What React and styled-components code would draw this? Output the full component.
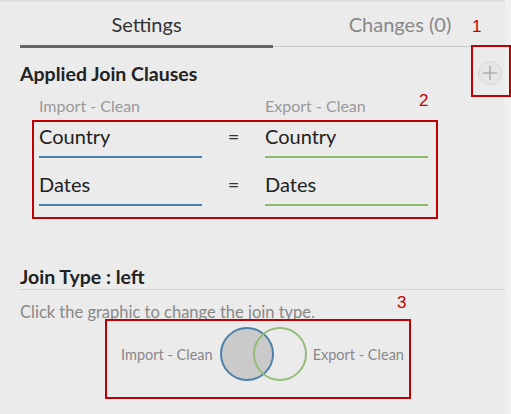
import React from "react";
import styled, { createGlobalStyle } from "styled-components";

const Global = createGlobalStyle`
  html, body { margin: 0; padding: 0; background: #ebebeb; }
  body { font-family: Lato, "Open Sans", sans-serif; }
`;

const Page = styled.div`
  position: relative;
  width: 511px;
  height: 414px;
  display: flex;
  background: #ebebeb;
  overflow: hidden;
`;

const Panel = styled.div`
  width: 505px;
  border-top: 2px solid #dedede;
  padding: 0 0 0 20px;
  box-sizing: border-box;
  display: flex;
  flex-direction: column;
`;

const SideStrip = styled.div`
  flex: 1;
  background: #f0f0f0;
`;

const Tabs = styled.div`
  display: flex;
  height: 46px;
`;

const Tab = styled.div`
  width: ${(p) => p.$w}px;
  box-sizing: border-box;
  display: flex;
  justify-content: center;
  padding-top: 10px;
  padding-left: ${(p) => p.$pl || 0}px;
  font-size: 20px;
  color: ${(p) => (p.$active ? "#333" : "#888")};
  border-bottom: ${(p) => (p.$active ? "3px solid #666" : "1px solid #c9c9c9")};
  height: ${(p) => (p.$active ? 46 : 45)}px;
`;

const SectionHead = styled.div`
  display: flex;
  align-items: center;
  justify-content: space-between;
  margin-top: ${(p) => p.$mt}px;
  padding-right: 3px;
  font-weight: 700;
  font-size: 19.5px;
  color: #222;
  height: 24px;
`;

const AddButton = styled.div`
  width: 22px;
  height: 22px;
  border-radius: 50%;
  background: #e6e6e6;
  border: 1px solid #d6d6d6;
  display: flex;
  align-items: center;
  justify-content: center;
`;

const SourceLabels = styled.div`
  display: grid;
  grid-template-columns: 226px 1fr;
  padding-left: 19px;
  margin-top: 11px;
  font-size: 16px;
  color: #999;
`;

const Clauses = styled.div`
  display: flex;
  flex-direction: column;
  padding-left: 19px;
  margin-top: 6px;
  gap: 11px;
`;

const ClauseRow = styled.div`
  display: grid;
  grid-template-columns: 163px 63px 163px;
  align-items: start;
`;

const Field = styled.div`
  font-size: 20px;
  color: #222;
  height: 37px;
  box-sizing: border-box;
  padding-top: 3px;
  border-bottom: 2px solid ${(p) => p.$color};
`;

const Equals = styled.div`
  font-size: 20px;
  color: #333;
  text-align: center;
  padding-top: 3px;
`;

const Divider = styled.div`
  height: 1px;
  background: #d3d3d3;
  margin-top: 1px;
`;

const Hint = styled.div`
  font-size: 16.5px;
  color: #888;
  margin-top: 12px;
`;

const VennRow = styled.div`
  display: flex;
  align-items: center;
  justify-content: center;
  margin-top: 3px;
  font-size: 14.5px;
  color: #888;
`;

const VennLabel = styled.span`
  margin: ${(p) => (p.$side === "left" ? "0 6px 0 0" : "0 0 0 5px")};
`;

const Annot = styled.div`
  position: absolute;
  left: ${(p) => p.$x}px;
  top: ${(p) => p.$y}px;
  width: ${(p) => p.$w}px;
  height: ${(p) => p.$h}px;
  border: 2px solid #c00000;
  box-sizing: border-box;
  pointer-events: none;
`;

const AnnotNum = styled.div`
  position: absolute;
  left: ${(p) => p.$x}px;
  top: ${(p) => p.$y}px;
  color: #c00000;
  font-family: "Liberation Sans", Arial, sans-serif;
  font-size: 17px;
  line-height: 1;
`;

function PlusIcon() {
  return (
    <svg width="16" height="16" viewBox="0 0 16 16">
      <path d="M8 1v14M1 8h14" stroke="#adadad" strokeWidth="1.6" />
    </svg>
  );
}

function Venn() {
  return (
    <svg width="89" height="58" viewBox="0 0 89 58">
      <circle cx="28" cy="29" r="26" fill="#cacaca" />
      <circle cx="28" cy="29" r="26" fill="none" stroke="#4d80a9" strokeWidth="2" />
      <circle cx="61" cy="29" r="26" fill="none" stroke="#93bc7a" strokeWidth="2" />
    </svg>
  );
}

export default function App() {
  const clauses = [
    ["Country", "Country"],
    ["Dates", "Dates"],
  ];
  return (
    <>
      <Global />
      <Page>
        <Panel>
          <Tabs>
            <Tab $w={253} $active>Settings</Tab>
            <Tab $w={232} $pl={22}>Changes (0)</Tab>
          </Tabs>
          <SectionHead $mt={13}>
            <span>Applied Join Clauses</span>
            <AddButton>
              <PlusIcon />
            </AddButton>
          </SectionHead>
          <SourceLabels>
            <span>Import - Clean</span>
            <span>Export - Clean</span>
          </SourceLabels>
          <Clauses>
            {clauses.map(([a, b]) => (
              <ClauseRow key={a}>
                <Field $color="#4a7fa9">{a}</Field>
                <Equals>=</Equals>
                <Field $color="#8cb870">{b}</Field>
              </ClauseRow>
            ))}
          </Clauses>
          <SectionHead $mt={58}>
            <span>Join Type : left</span>
          </SectionHead>
          <Divider />
          <Hint>Click the graphic to change the join type.</Hint>
          <VennRow>
            <VennLabel $side="left">Import - Clean</VennLabel>
            <Venn />
            <VennLabel $side="right">Export - Clean</VennLabel>
          </VennRow>
        </Panel>
        <SideStrip />
        <AnnotNum $x={472} $y={18}>1</AnnotNum>
        <Annot $x={471} $y={45} $w={40} $h={52} />
        <AnnotNum $x={419} $y={92}>2</AnnotNum>
        <Annot $x={32} $y={120} $w={406} $h={99} />
        <AnnotNum $x={397} $y={294}>3</AnnotNum>
        <Annot $x={105} $y={319} $w={306} $h={80} />
      </Page>
    </>
  );
}
